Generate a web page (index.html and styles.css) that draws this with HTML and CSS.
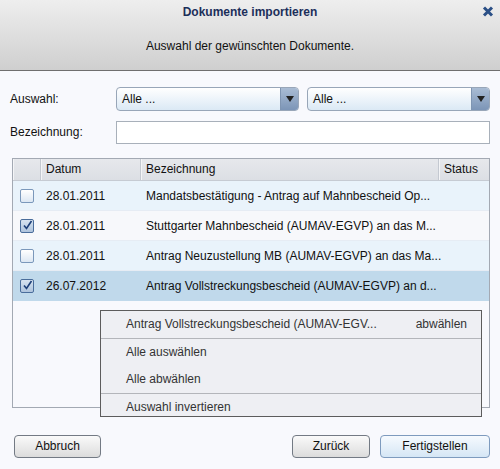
FILE: index.html
```html
<!DOCTYPE html>
<html>
<head>
<meta charset="utf-8">
<link rel="stylesheet" href="styles.css">
</head>
<body>
<div class="dialog">
  <div class="header">
    <div class="title">Dokumente importieren</div>
    <div class="close">
      <svg width="12" height="11" viewBox="0 0 12 11"><path d="M2 1.5 L10 9.5 M10 1.5 L2 9.5" stroke="#2a4f86" stroke-width="3" stroke-linecap="butt"/></svg>
    </div>
    <div class="subtitle">Auswahl der gewünschten Dokumente.</div>
  </div>
  <div class="body">
    <div class="formrow r1">
      <div class="label">Auswahl:</div>
      <div class="selects">
        <div class="select"><span class="val">Alle ...</span><span class="arrow"><svg width="8" height="6" viewBox="0 0 8 6"><path d="M0 0 H8 L4 6 Z" fill="#222"/></svg></span></div>
        <div class="select"><span class="val">Alle ...</span><span class="arrow"><svg width="8" height="6" viewBox="0 0 8 6"><path d="M0 0 H8 L4 6 Z" fill="#222"/></svg></span></div>
      </div>
    </div>
    <div class="formrow r2">
      <div class="label">Bezeichnung:</div>
      <div class="input"></div>
    </div>
    <div class="tablewrap">
      <div class="table">
        <div class="row head">
          <div class="c c0"></div>
          <div class="c c1">Datum</div>
          <div class="c c2">Bezeichnung</div>
          <div class="c c3">Status</div>
        </div>
        <div class="row odd">
          <div class="c c0"><span class="cb"></span></div>
          <div class="c c1">28.01.2011</div>
          <div class="c c2">Mandatsbestätigung - Antrag auf Mahnbescheid Op...</div>
          <div class="c c3"></div>
        </div>
        <div class="row even">
          <div class="c c0"><span class="cb checked"><svg width="11" height="11" viewBox="0 0 11 11"><path d="M2 5.5 L4.5 8.5 L9.5 1" fill="none" stroke="#1d3f78" stroke-width="1.6"/></svg></span></div>
          <div class="c c1">28.01.2011</div>
          <div class="c c2">Stuttgarter Mahnbescheid (AUMAV-EGVP) an das M...</div>
          <div class="c c3"></div>
        </div>
        <div class="row odd">
          <div class="c c0"><span class="cb"></span></div>
          <div class="c c1">28.01.2011</div>
          <div class="c c2">Antrag Neuzustellung MB (AUMAV-EGVP) an das Ma...</div>
          <div class="c c3"></div>
        </div>
        <div class="row sel">
          <div class="c c0"><span class="cb checked"><svg width="11" height="11" viewBox="0 0 11 11"><path d="M2 5.5 L4.5 8.5 L9.5 1" fill="none" stroke="#1d3f78" stroke-width="1.6"/></svg></span></div>
          <div class="c c1">26.07.2012</div>
          <div class="c c2">Antrag Vollstreckungsbescheid (AUMAV-EGVP) an d...</div>
          <div class="c c3"></div>
        </div>
      </div>
      <div class="menu">
        <div class="mi first"><span>Antrag Vollstreckungsbescheid (AUMAV-EGV...</span><span>abwählen</span></div>
        <div class="sep"></div>
        <div class="mi">Alle auswählen</div>
        <div class="mi">Alle abwählen</div>
        <div class="sep"></div>
        <div class="mi last">Auswahl invertieren</div>
      </div>
    </div>
    <div class="buttons">
      <div class="btn abbruch">Abbruch</div>
      <div class="spacer"></div>
      <div class="btn zurueck">Zurück</div>
      <div class="btn primary">Fertigstellen</div>
    </div>
  </div>
</div>
</body>
</html>
```

FILE: styles.css
```css
html, body {
  margin: 0;
  padding: 0;
}
body {
  width: 500px;
  height: 469px;
  overflow: hidden;
  background: #f8f9fd;
  font-family: "Liberation Sans", Arial, sans-serif;
  font-size: 12px;
  color: #111;
}
.dialog {
  width: 500px;
  height: 469px;
  display: flex;
  flex-direction: column;
}
.header {
  position: relative;
  height: 70px;
  background: linear-gradient(#eeeeee, #cfcfcf);
  border-bottom: 1px solid #6f6f6f;
  text-align: center;
}
.title {
  padding-top: 5px;
  font-weight: bold;
  font-size: 12px;
  color: #1c2f5a;
  line-height: 14px;
}
.close {
  position: absolute;
  right: 6px;
  top: 6px;
  width: 12px;
  height: 11px;
}
.close svg { display: block; }
.subtitle {
  margin-top: 20px;
  line-height: 14px;
  color: #111;
}
.body {
  flex: 1;
  display: flex;
  flex-direction: column;
  padding: 0 10px 0 10px;
}
.formrow {
  display: flex;
  align-items: center;
}
.r1 { margin-top: 16px; height: 24px; }
.r2 { margin-top: 9px; height: 24px; }
.label {
  width: 106px;
  flex: none;
}
.selects {
  flex: 1;
  display: flex;
  gap: 8px;
}
.select {
  flex: 1;
  height: 22px;
  border: 1px solid #98a6b8;
  border-radius: 4px;
  background: linear-gradient(#ffffff, #dbe9f5);
  display: flex;
  overflow: hidden;
}
.select .val {
  flex: 1;
  padding-left: 5px;
  line-height: 22px;
}
.select .arrow {
  width: 17px;
  border-left: 1px solid #7f95b2;
  background: linear-gradient(#a9bcd4, #7c95b7);
  display: flex;
  align-items: center;
  justify-content: center;
}
.input {
  flex: 1;
  height: 21px;
  border: 1px solid #a8b0ba;
  background: #ffffff;
}
.tablewrap {
  position: relative;
  margin-top: 14px;
  margin-left: 2px;
  height: 248px;
  border: 1px solid #a3a9b3;
  background: #f8f9fd;
}
.table {
  display: flex;
  flex-direction: column;
}
.row {
  display: grid;
  grid-template-columns: 28px 100px 298px 1fr;
  height: 29px;
  align-items: center;
  border-bottom: 1px solid #e6ecf4;
}
.row.head {
  height: 21px;
  background: linear-gradient(#e6e8ec, #dcdfe4);
  border-bottom: 1px solid #c6cbd3;
}
.row.head .c {
  height: 21px;
  line-height: 21px;
  border-right: 1px solid #c4c9d1;
  box-shadow: inset 1px 0 0 #f4f5f7;
}
.row.head .c3 { border-right: none; }
.c {
  white-space: nowrap;
  padding-left: 5px;
}
.c0 {
  padding-left: 0;
  display: flex;
  justify-content: center;
}
.row.odd { background: #e9f3fb; }
.row.even { background: #f7f8fb; }
.row.sel { background: #c0d9eb; border-bottom-color: #c0d9eb; }
.cb {
  width: 12px;
  height: 12px;
  border: 1px solid #7b98bb;
  border-radius: 2px;
  background: linear-gradient(#ffffff, #dce7f3);
  display: flex;
  align-items: center;
  justify-content: center;
}
.cb.checked {
  background: linear-gradient(#d7e3f0, #aec3dc);
  border-color: #4a6d9b;
}
.cb svg { display: block; }
.menu {
  position: absolute;
  left: 87px;
  top: 151px;
  width: 380px;
  border: 1px solid #5c5c5c;
  background: #eeeff3;
  display: flex;
  flex-direction: column;
}
.mi {
  height: 27px;
  line-height: 27px;
  padding-left: 25px;
  padding-right: 14px;
  color: #333;
}
.mi.first {
  display: flex;
  justify-content: space-between;
}
.sep {
  height: 1px;
  background: #b3b5ba;
}
.mi.last {
  height: 18px;
  line-height: 18px;
  padding-top: 4px;
}
.buttons {
  margin-top: 27px;
  display: flex;
  gap: 10px;
}
.spacer { flex: 1; }
.btn {
  height: 21px;
  line-height: 21px;
  border: 1px solid #737a84;
  border-radius: 4px;
  background: linear-gradient(#fafafa, #dcdcdc);
  text-align: center;
}
.abbruch { width: 85px; margin-left: 4px; }
.zurueck { width: 76px; }
.primary {
  width: 108px;
  border-color: #7e9bbe;
  background: linear-gradient(#f6fafe, #d5e6f5);
}
```
